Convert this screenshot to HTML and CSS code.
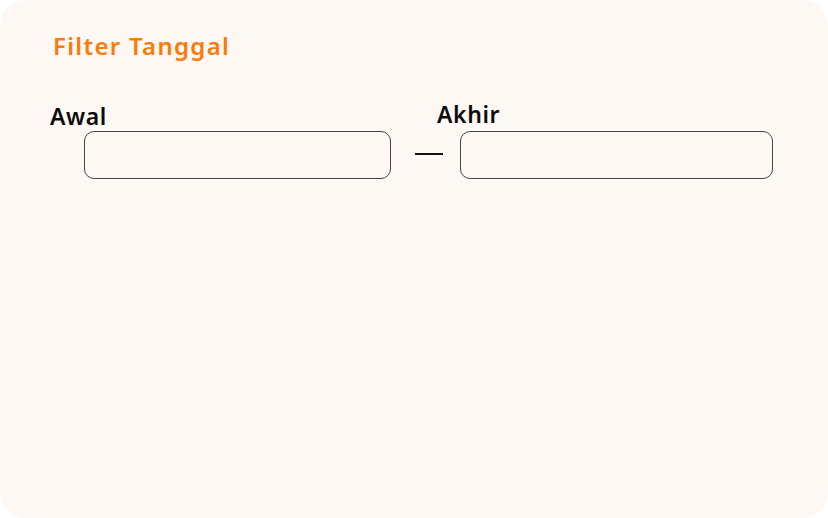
FILE: index.html
```html
<!DOCTYPE html>
<html lang="id">
<head>
  <meta charset="UTF-8">
  <meta name="viewport" content="width=device-width, initial-scale=1.0">
  <title>Filter Tanggal</title>
  <link rel="stylesheet" href="styles.css">
</head>
<body>
  <div class="card">
    <h2 class="card-title">Filter Tanggal</h2>
    <form class="date-filter">
      <div class="field field-start">
        <label for="awal">Awal</label>
        <input id="awal" type="text" name="awal">
      </div>
      <span class="separator"></span>
      <div class="field field-end">
        <label for="akhir">Akhir</label>
        <input id="akhir" type="text" name="akhir">
      </div>
    </form>
  </div>
</body>
</html>
```

FILE: styles.css
```css
html, body {
  margin: 0;
  background: #ffffff;
}

body {
  font-family: "Noto Sans", "DejaVu Sans", sans-serif;
  color: #0d0d0d;
}

.card {
  box-sizing: border-box;
  width: 828px;
  height: 518px;
  background: #fdf8f3;
  border-radius: 26px;
  padding: 28px 50px;
}

.card-title {
  margin: 0 0 0 3px;
  font-size: 24px;
  font-weight: 600;
  letter-spacing: 1.3px;
  line-height: 36px;
  color: #fb7b0a;
}

.date-filter {
  display: flex;
  align-items: flex-start;
  margin-top: 36px;
}

.field {
  display: flex;
  flex-direction: column;
}

.field label {
  font-size: 23px;
  font-weight: 600;
  letter-spacing: 0.6px;
  line-height: 30px;
}

.field input {
  box-sizing: border-box;
  height: 48px;
  border: 1px solid #444;
  border-radius: 10px;
  background: transparent;
  font: inherit;
}

.field-start {
  margin-top: 1px;
}

.field-start input {
  width: 307px;
  margin-left: 34px;
}

.field-end {
  margin-top: -1px;
}

.field-end label {
  margin-bottom: 2px;
}

.field-end input {
  width: 313px;
  margin-left: 23px;
}

.separator {
  flex: none;
  width: 28px;
  height: 2px;
  margin: 53px -6px 0 24px;
  background: #111;
}
```
